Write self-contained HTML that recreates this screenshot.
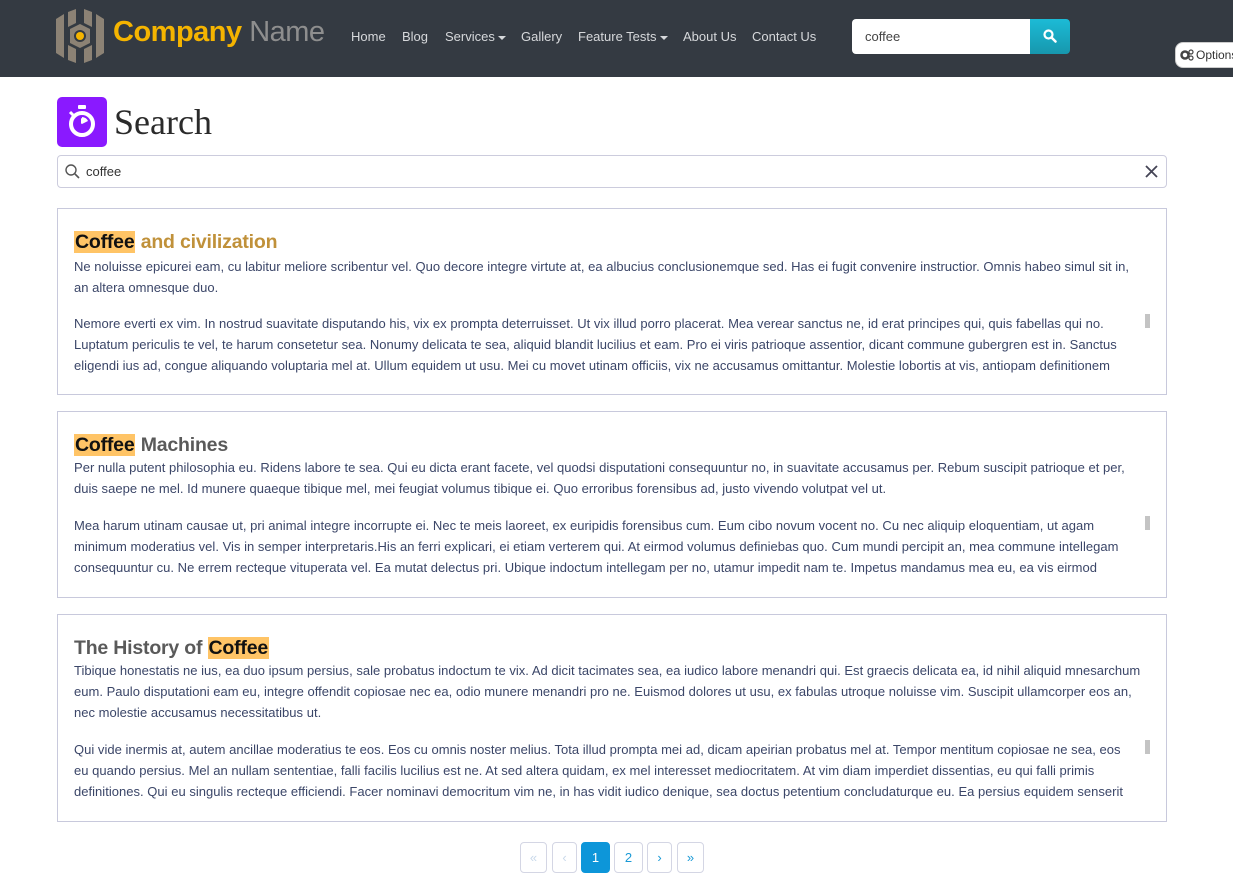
<!DOCTYPE html>
<html><head><meta charset="utf-8"><style>
*{box-sizing:border-box;margin:0;padding:0}
body{width:1233px;height:886px;overflow:hidden;background:#fff;font-family:"Liberation Sans",sans-serif;position:relative}
.nav{position:absolute;left:0;top:0;width:1233px;height:77px;background:#343a42}
.brand{position:absolute;left:113px;top:16px;font-size:29px;font-weight:bold;color:#f5b400;letter-spacing:-0.5px}
.brand span{color:#8e8e8e;font-weight:normal}
.links{position:absolute;top:29px;left:351px;font-size:13px;color:#d6d8db;white-space:nowrap}
.links span{position:absolute}
.caret{display:inline-block;border-left:4px solid transparent;border-right:4px solid transparent;border-top:4px solid #d6d8db;vertical-align:middle;margin-left:3px}
.sinput{position:absolute;left:852px;top:19px;width:179px;height:35px;background:#fff;border-radius:4px 0 0 4px;font-size:13px;color:#444;padding:10px 13px}
.sbtn{position:absolute;left:1030px;top:19px;width:40px;height:35px;background:linear-gradient(#1cbbd6,#1797ad);border-radius:0 4px 4px 0}
.opt{position:absolute;left:1175px;top:42px;width:70px;height:26px;background:#fff;border:1px solid #ccc;border-radius:8px;font-size:12px;color:#333;padding:5px 0 0 20px}
.title{position:absolute;left:114px;top:101px;font-family:"Liberation Serif",serif;font-size:36px;color:#2a2a2a}
.icon{position:absolute;left:57px;top:97px;width:50px;height:50px;background:#8a19ff;border-radius:5px}
.search{position:absolute;left:57px;top:155px;width:1110px;height:33px;border:1px solid #ccd;border-radius:4px;font-size:13px;color:#333;padding:8px 0 0 28px}
.card{position:absolute;left:57px;width:1110px;border:1px solid #c8c9dc;background:#fff}
.card h3{position:absolute;left:16px;top:22px;font-size:19.5px;font-weight:bold;color:#5a5a5a;white-space:nowrap;letter-spacing:-0.2px}
.card h3.g{color:#c0913a}
mark{background:#ffc466;color:#111;padding:0 1px}
.p{position:absolute;left:16px;font-size:13px;line-height:21px;color:#3b4668;white-space:nowrap;letter-spacing:0.02px}
.sb{position:absolute;left:1087px;width:5px;height:14px;background:#c4c4c4}
.pg{position:absolute;top:842px;height:31px;border:1px solid #d4d6e4;border-radius:4px;font-size:13px;color:#1a9ad6;text-align:center;line-height:29px}
</style></head><body>
<div class="nav">
<svg style="position:absolute;left:56px;top:9px" width="48" height="54" viewBox="0 0 48 54"><g fill="#8c8275"><polygon points="0,10 8,5 8,49 0,44"/><polygon points="40,5 48,10 48,44 40,49"/><polygon points="12,3 20,0 20,14 12,18"/><polygon points="28,0 36,3 36,18 28,14"/><polygon points="12,36 20,40 20,54 12,51"/><polygon points="28,40 36,36 36,51 28,54"/><polygon points="14,20 24,15 34,20 34,34 24,39 14,34"/></g><circle cx="24" cy="27" r="6" fill="#343a42"/><circle cx="24" cy="27" r="4" fill="#f5b400"/></svg>
<div class="brand">Company <span>Name</span></div>
<div class="links"><span style="left:0">Home</span><span style="left:51px">Blog</span><span style="left:94px">Services<i class="caret"></i></span><span style="left:170px">Gallery</span><span style="left:227px">Feature Tests<i class="caret"></i></span><span style="left:332px">About Us</span><span style="left:401px">Contact Us</span></div>
<div class="sinput">coffee</div>
<div class="sbtn"><svg style="position:absolute;left:13px;top:10px" width="14" height="14" viewBox="0 0 14 14"><circle cx="5.5" cy="5.5" r="4" stroke="#fff" stroke-width="2.2" fill="none"/><line x1="8.5" y1="8.5" x2="12.5" y2="12.5" stroke="#fff" stroke-width="2.5" stroke-linecap="round"/></svg></div>
</div>
<div class="opt"><svg style="position:absolute;left:4px;top:6px" width="14" height="12"><circle cx="5" cy="6" r="3.5" fill="none" stroke="#444" stroke-width="2.5"/><circle cx="11" cy="3" r="2" fill="none" stroke="#444" stroke-width="1.2"/><circle cx="11" cy="9" r="2" fill="none" stroke="#444" stroke-width="1.2"/></svg>Options</div>
<div class="icon"><svg width="50" height="50" viewBox="0 0 50 50"><rect x="21" y="8" width="8" height="4" fill="#fff" rx="1"/><line x1="13" y1="15" x2="16" y2="18" stroke="#fff" stroke-width="3"/><circle cx="25" cy="27" r="11" fill="none" stroke="#fff" stroke-width="4"/><path d="M24 21v6l5-3z" fill="#fff"/><path d="M25 27 L25 20 A7 7 0 0 1 31 24Z" fill="#fff"/></svg></div>
<div class="title">Search</div>
<div class="search"><svg style="position:absolute;left:7px;top:8px" width="15" height="15"><circle cx="6" cy="6" r="5" fill="none" stroke="#555" stroke-width="1.4"/><line x1="10" y1="10" x2="14" y2="14" stroke="#555" stroke-width="1.6"/></svg>coffee<svg style="position:absolute;right:8px;top:9px" width="13" height="13"><path d="M1 1L12 12M12 1L1 12" stroke="#445" stroke-width="1.8"/></svg></div>

<div class="card" style="top:208px;height:187px"><h3 class="g"><mark>Coffee</mark> and civilization</h3>
<div class="p" style="top:47px">Ne noluisse epicurei eam, cu labitur meliore scribentur vel. Quo decore integre virtute at, ea albucius conclusionemque sed. Has ei fugit convenire instructior. Omnis habeo simul sit in,<br>an altera omnesque duo.</div>
<div class="p" style="top:104px">Nemore everti ex vim. In nostrud suavitate disputando his, vix ex prompta deterruisset. Ut vix illud porro placerat. Mea verear sanctus ne, id erat principes qui, quis fabellas qui no.<br>Luptatum periculis te vel, te harum consetetur sea. Nonumy delicata te sea, aliquid blandit lucilius et eam. Pro ei viris patrioque assentior, dicant commune gubergren est in. Sanctus<br>eligendi ius ad, congue aliquando voluptaria mel at. Ullum equidem ut usu. Mei cu movet utinam officiis, vix ne accusamus omittantur. Molestie lobortis at vis, antiopam definitionem</div>
<div class="sb" style="top:105px"></div></div>

<div class="card" style="top:411px;height:187px"><h3><mark>Coffee</mark> Machines</h3>
<div class="p" style="top:45px">Per nulla putent philosophia eu. Ridens labore te sea. Qui eu dicta erant facete, vel quodsi disputationi consequuntur no, in suavitate accusamus per. Rebum suscipit patrioque et per,<br>duis saepe ne mel. Id munere quaeque tibique mel, mei feugiat volumus tibique ei. Quo erroribus forensibus ad, justo vivendo volutpat vel ut.</div>
<div class="p" style="top:103px">Mea harum utinam causae ut, pri animal integre incorrupte ei. Nec te meis laoreet, ex euripidis forensibus cum. Eum cibo novum vocent no. Cu nec aliquip eloquentiam, ut agam<br>minimum moderatius vel. Vis in semper interpretaris.His an ferri explicari, ei etiam verterem qui. At eirmod volumus definiebas quo. Cum mundi percipit an, mea commune intellegam<br>consequuntur cu. Ne errem recteque vituperata vel. Ea mutat delectus pri. Ubique indoctum intellegam per no, utamur impedit nam te. Impetus mandamus mea eu, ea vis eirmod</div>
<div class="sb" style="top:104px"></div></div>

<div class="card" style="top:614px;height:208px"><h3>The History of <mark>Coffee</mark></h3>
<div class="p" style="top:45px">Tibique honestatis ne ius, ea duo ipsum persius, sale probatus indoctum te vix. Ad dicit tacimates sea, ea iudico labore menandri qui. Est graecis delicata ea, id nihil aliquid mnesarchum<br>eum. Paulo disputationi eam eu, integre offendit copiosae nec ea, odio munere menandri pro ne. Euismod dolores ut usu, ex fabulas utroque noluisse vim. Suscipit ullamcorper eos an,<br>nec molestie accusamus necessitatibus ut.</div>
<div class="p" style="top:124px">Qui vide inermis at, autem ancillae moderatius te eos. Eos cu omnis noster melius. Tota illud prompta mei ad, dicam apeirian probatus mel at. Tempor mentitum copiosae ne sea, eos<br>eu quando persius. Mel an nullam sententiae, falli facilis lucilius est ne. At sed altera quidam, ex mel interesset mediocritatem. At vim diam imperdiet dissentias, eu qui falli primis<br>definitiones. Qui eu singulis recteque efficiendi. Facer nominavi democritum vim ne, in has vidit iudico denique, sea doctus petentium concludaturque eu. Ea persius equidem senserit</div>
<div class="sb" style="top:125px"></div></div>

<div class="pg" style="left:520px;width:27px;color:#c8d8ea">«</div>
<div class="pg" style="left:552px;width:25px;color:#c8d8ea">‹</div>
<div class="pg" style="left:581px;width:29px;background:#0d96d9;border-color:#0d96d9;color:#fff">1</div>
<div class="pg" style="left:614px;width:29px">2</div>
<div class="pg" style="left:647px;width:25px">›</div>
<div class="pg" style="left:677px;width:27px">»</div>
</body></html>
